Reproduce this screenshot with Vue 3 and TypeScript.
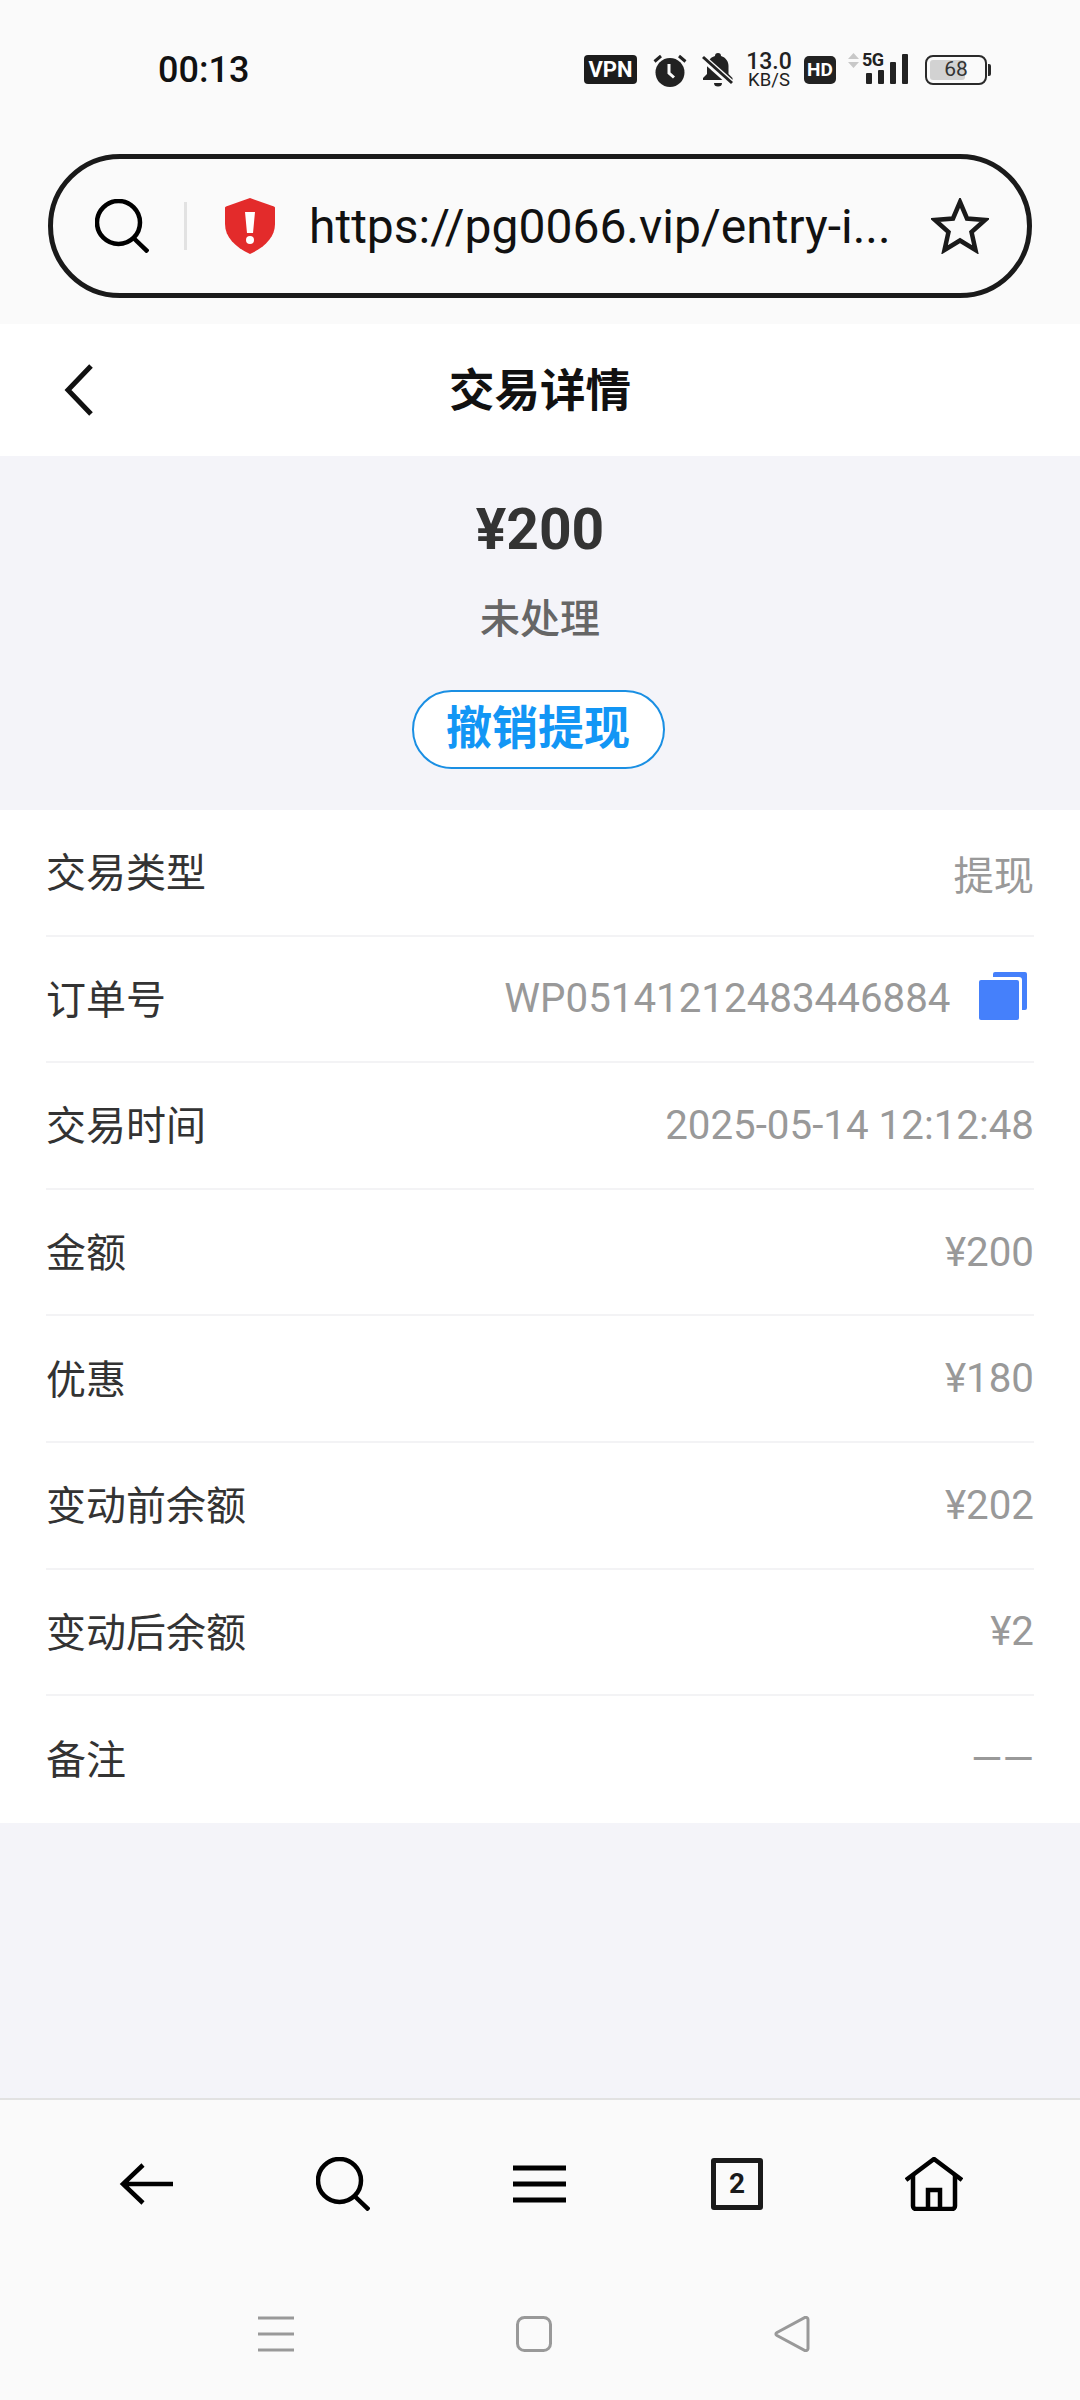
<script setup lang="ts">
interface DetailRow {
  label: string;
  value: string;
  copy?: boolean;
}

const rows: DetailRow[] = [
  { label: '交易类型', value: '提现' },
  { label: '订单号', value: 'WP05141212483446884', copy: true },
  { label: '交易时间', value: '2025-05-14 12:12:48' },
  { label: '金额', value: '¥200' },
  { label: '优惠', value: '¥180' },
  { label: '变动前余额', value: '¥202' },
  { label: '变动后余额', value: '¥2' },
  { label: '备注', value: '——' },
];
</script>

<template>
  <div class="page">
    <!-- 状态栏 + 地址栏 -->
    <div class="browser-top">
      <div class="status-bar">
        <span class="time">00:13</span>
        <div class="status-icons">
          <span class="vpn">VPN</span>
          <svg class="ic-alarm" width="34" height="36" viewBox="0 0 34 36">
            <circle cx="17" cy="20.500" r="14.500" fill="#222" />
            <path d="M1.500 9.500 8 4M32.500 9.500 26 4" stroke="#222" stroke-width="3" fill="none" />
            <path d="M16 12v9l5 4.500" stroke="#fafafa" stroke-width="3" fill="none" />
          </svg>
          <svg class="ic-bell" width="32" height="36" viewBox="0 0 32 36">
            <path d="M16 1a3 3 0 0 1 3 3c5 1.500 7.500 5.500 7.500 10v8l4 4v2H1v-2l4-4v-8C5 9.500 8 5.500 13 4a3 3 0 0 1 3-3Z" fill="#222" />
            <path d="M12 31h8a4 3.500 0 0 1-8 0Z" fill="#222" />
            <path d="M1 6 30 32" stroke="#fafafa" stroke-width="7" />
            <path d="M1 5 30 31" stroke="#222" stroke-width="3" />
          </svg>
          <div class="speed">
            <span class="speed-num">13.0</span>
            <span class="speed-unit">KB/S</span>
          </div>
          <span class="hd">HD</span>
          <div class="signal">
            <svg class="arrows" width="11" height="15" viewBox="0 0 11 15">
              <path d="M5.500 0 11 6H0ZM5.500 15 0 9h11Z" fill="#c8c8c8" />
            </svg>
            <span class="five-g">5G</span>
            <svg class="bars" width="43" height="30" viewBox="0 0 43 30">
              <rect x="0" y="19" width="6" height="11" rx="1" fill="#222" />
              <rect x="12" y="16" width="6" height="14" rx="1" fill="#222" />
              <rect x="24" y="8" width="6" height="22" rx="1" fill="#222" />
              <rect x="36" y="0" width="6" height="30" rx="1" fill="#222" />
            </svg>
          </div>
          <div class="battery">
            <div class="battery-body">
              <div class="battery-fill" :style="{ width: '68%' }"></div>
              <span class="battery-num">68</span>
            </div>
            <span class="battery-nub"></span>
          </div>
        </div>
      </div>

      <div class="url-bar">
        <svg class="ic-search" width="54" height="54" viewBox="0 0 54 54">
          <circle cx="23.500" cy="23.500" r="21.500" fill="none" stroke="#000" stroke-width="4.500" />
          <path d="M38.500 39 53 53" stroke="#000" stroke-width="4.500" fill="none" />
        </svg>
        <span class="url-divider"></span>
        <svg class="ic-shield" width="50" height="56" viewBox="0 0 50 56">
          <path d="M25 0 49 8.500c1 .5 1 1 1 2V26c0 13-10 23-25 30C10 49 0 39 0 26V10.500c0-1 0-1.500 1-2Z" fill="#e32b2b" />
          <path d="M20 14h10l-2 21h-6Z" fill="#fff" />
          <circle cx="25" cy="42" r="4" fill="#fff" />
        </svg>
        <span class="url-text">https://pg0066.vip/entry-i...</span>
        <svg class="ic-star" width="58" height="56" viewBox="0 0 58 56">
          <path d="M29 4 36 20.500 54 22 40.500 34 44.500 52 29 42.500 13.500 52 17.500 34 4 22 22 20.500Z" fill="none" stroke="#1a1a1a" stroke-width="4.500" />
        </svg>
      </div>
    </div>

    <!-- 页头 -->
    <header class="head">
      <svg class="ic-back" width="30" height="52" viewBox="0 0 30 52">
        <path d="M27 2 4 26l23 24" fill="none" stroke="#111" stroke-width="5" />
      </svg>
      <h1 class="title">交易详情</h1>
    </header>

    <!-- 金额概要 -->
    <section class="summary">
      <div class="amount">¥200</div>
      <div class="state">未处理</div>
      <button class="cancel-btn">撤销提现</button>
    </section>

    <!-- 明细 -->
    <ul class="detail-list">
      <li v-for="row in rows" :key="row.label" class="detail-row">
        <span class="label">{{ row.label }}</span>
        <span class="value">
          {{ row.value }}
          <svg v-if="row.copy" class="ic-copy" width="48" height="48" viewBox="0 0 48 48">
            <path d="M14 2a2 2 0 0 1 2-2h30a2 2 0 0 1 2 2v34a2 2 0 0 1-2 2h-3V8a3 3 0 0 0-3-3H14Z" fill="#4580fb" />
            <rect x="0" y="8" width="40" height="40" rx="2" fill="#4580fb" />
          </svg>
        </span>
      </li>
    </ul>

    <div class="spacer"></div>

    <!-- 浏览器底栏 -->
    <footer class="toolbar">
      <div class="tool-row">
        <svg width="54" height="42" viewBox="0 0 54 42">
          <path d="M24 2 4 21l20 19M4 21h50" fill="none" stroke="#000" stroke-width="4.500" />
        </svg>
        <svg width="54" height="54" viewBox="0 0 54 54">
          <circle cx="23.500" cy="23.500" r="21.500" fill="none" stroke="#000" stroke-width="4.500" />
          <path d="M38.500 39 53 53" stroke="#000" stroke-width="4.500" fill="none" />
        </svg>
        <svg class="ic-menu" width="53" height="38" viewBox="0 0 53 38">
          <path d="M0 3h53M0 19h53M0 35h53" stroke="#000" stroke-width="5" />
        </svg>
        <div class="tab-count">2</div>
        <svg width="58" height="54" viewBox="0 0 58 54">
          <path d="M1 23 29 2l28 21" fill="none" stroke="#000" stroke-width="4.500" />
          <path d="M8 18v31a3 3 0 0 0 3 3h36a3 3 0 0 0 3-3V18" fill="none" stroke="#000" stroke-width="4.500" />
          <path d="M23 52V33h12v19" fill="none" stroke="#000" stroke-width="4.500" />
        </svg>
      </div>
      <div class="nav-row">
        <svg width="36" height="36" viewBox="0 0 36 36">
          <path d="M0 2h36M0 18h36M0 34h36" stroke="#999" stroke-width="3" />
        </svg>
        <svg width="36" height="36" viewBox="0 0 36 36">
          <rect x="1.500" y="1.500" width="33" height="33" rx="7" fill="none" stroke="#999" stroke-width="3" />
        </svg>
        <svg width="36" height="36" viewBox="0 0 36 36">
          <path d="M3 16.500 31 1.500c1.500-.5 3 .5 3 2v29c0 1.500-1.500 2.500-3 2L3 19.500c-1.500-1-1.500-2 0-3Z" fill="none" stroke="#999" stroke-width="3" />
        </svg>
      </div>
    </footer>
  </div>
</template>

<style scoped>
.page {
  height: 100vh;
  display: flex;
  flex-direction: column;
  background: #f4f4f9;
  font-family: Roboto, "Noto Sans CJK SC", sans-serif;
  color: #333;
}

.browser-top {
  background: #fafafa;
  padding: 0 48px 26px;
}
.status-bar {
  height: 154px;
  padding-bottom: 15px;
  box-sizing: border-box;
  display: flex;
  align-items: center;
  justify-content: space-between;
  padding-left: 110px;
  padding-right: 41px;
}
.time {
  font-size: 36px;
  font-weight: 500;
  color: #111;
}
.status-icons {
  display: flex;
  align-items: center;
}
.vpn {
  width: 53px;
  height: 29px;
  border-radius: 4px;
  background: #1c1c1c;
  color: #fff;
  font-size: 22px;
  font-weight: 700;
  line-height: 29px;
  text-align: center;
}
.ic-alarm { margin-left: 16px; }
.ic-bell { margin-left: 15px; }
.speed {
  margin-left: 13px;
  width: 44px;
  display: flex;
  flex-direction: column;
  align-items: center;
  color: #222;
}
.speed-num { font-size: 23px; line-height: 20px; font-weight: 500; }
.speed-unit { font-size: 18.500px; line-height: 16px; }
.hd {
  margin-left: 13px;
  width: 32px;
  height: 28px;
  border-radius: 5px;
  background: #222;
  color: #fff;
  font-size: 19px;
  font-weight: 700;
  line-height: 28px;
  text-align: center;
}
.signal {
  position: relative;
  margin-left: 12px;
  width: 61px;
  height: 36px;
}
.arrows {
  position: absolute;
  left: 0;
  top: 1.500px;
}
.five-g {
  position: absolute;
  left: 14px;
  top: -1.500px;
  font-size: 18px;
  line-height: 20px;
  font-weight: 700;
  color: #222;
  letter-spacing: -0.5px;
}
.bars {
  position: absolute;
  left: 18px;
  top: 2.500px;
}
.battery {
  margin-left: 16px;
  display: flex;
  align-items: center;
  gap: 1px;
}
.battery-body {
  position: relative;
  width: 62px;
  height: 30px;
  box-sizing: border-box;
  border: 2.500px solid #2a2a2a;
  border-radius: 8px;
  padding: 3px;
  overflow: hidden;
}
.battery-fill {
  height: 100%;
  background: #d2d2d2;
  border-radius: 3px;
}
.battery-num {
  position: absolute;
  inset: 0;
  text-align: center;
  font-size: 21px;
  line-height: 25px;
  color: #333;
}
.battery-nub {
  width: 3px;
  height: 12px;
  border-radius: 0 2px 2px 0;
  background: #2a2a2a;
}

.url-bar {
  height: 144px;
  box-sizing: border-box;
  border: 5px solid #1a1a1a;
  border-radius: 72px;
  display: flex;
  align-items: center;
  padding: 0 38px 0 42px;
}
.ic-search { flex: none; }
.url-divider {
  flex: none;
  width: 3px;
  height: 48px;
  margin-left: 35px;
  background: #e2e2e2;
}
.ic-shield { flex: none; margin-left: 38px; }
.url-text {
  flex: 1;
  margin-left: 34px;
  font-size: 48px;
  color: #111;
  white-space: nowrap;
}
.ic-star { flex: none; }

.head {
  position: relative;
  height: 132px;
  box-sizing: border-box;
  padding-bottom: 6px;
  background: #fff;
  display: flex;
  align-items: center;
  justify-content: center;
}
.ic-back {
  position: absolute;
  left: 64px;
  top: 40px;
}
.title {
  margin: 0;
  font-size: 45.500px;
  font-weight: 700;
  color: #111;
}

.summary {
  height: 354px;
  box-sizing: border-box;
  padding-top: 41px;
  display: flex;
  flex-direction: column;
  align-items: center;
}
.amount {
  font-size: 57px;
  line-height: 66px;
  font-weight: 700;
  color: #333;
}
.state {
  margin-top: 29px;
  font-size: 40px;
  line-height: 56px;
  font-weight: 500;
  color: #666;
}
.cancel-btn {
  margin-top: 42px;
  margin-right: 4px;
  width: 253px;
  height: 79px;
  padding: 0 0 4px;
  border: 2px solid #1a8fe3;
  border-radius: 40px;
  background: #fff;
  color: #1296f5;
  font-family: inherit;
  font-size: 46px;
  font-weight: 700;
  line-height: 1;
}

.detail-list {
  margin: 0;
  padding: 0 46px;
  list-style: none;
  background: #fff;
}
.detail-row {
  height: 126.600px;
  box-sizing: border-box;
  display: flex;
  align-items: center;
  justify-content: space-between;
  border-bottom: 2px solid #f3f3f5;
}
.detail-row:last-child { border-bottom: none; }
.label {
  font-size: 40px;
  color: #333;
  margin-bottom: 4px;
}
.value {
  display: flex;
  align-items: center;
  font-size: 40.300px;
  color: #999;
}
.ic-copy { margin: 0 7px 6px 28.500px; }

.spacer { flex: 1; }

.toolbar {
  height: 302px;
  box-sizing: border-box;
  background: #fafafa;
  border-top: 2px solid #e2e2e2;
  padding-top: 56px;
}
.tool-row {
  display: grid;
  grid-template-columns: repeat(5, 197px);
  justify-content: center;
  justify-items: center;
  align-items: center;
  height: 56px;
}
.ic-menu { margin-right: 2px; }
.tab-count {
  width: 52px;
  height: 52px;
  box-sizing: border-box;
  border: 5px solid #1a1a1a;
  border-radius: 3px;
  font-size: 28px;
  font-weight: 700;
  line-height: 42px;
  text-align: center;
  color: #1a1a1a;
}
.nav-row {
  margin-top: 104px;
  padding-right: 12px;
  display: grid;
  grid-template-columns: repeat(3, 258px);
  justify-content: center;
  justify-items: center;
  align-items: center;
}
</style>

<style>
html, body { background: #f4f4f9; }
</style>
